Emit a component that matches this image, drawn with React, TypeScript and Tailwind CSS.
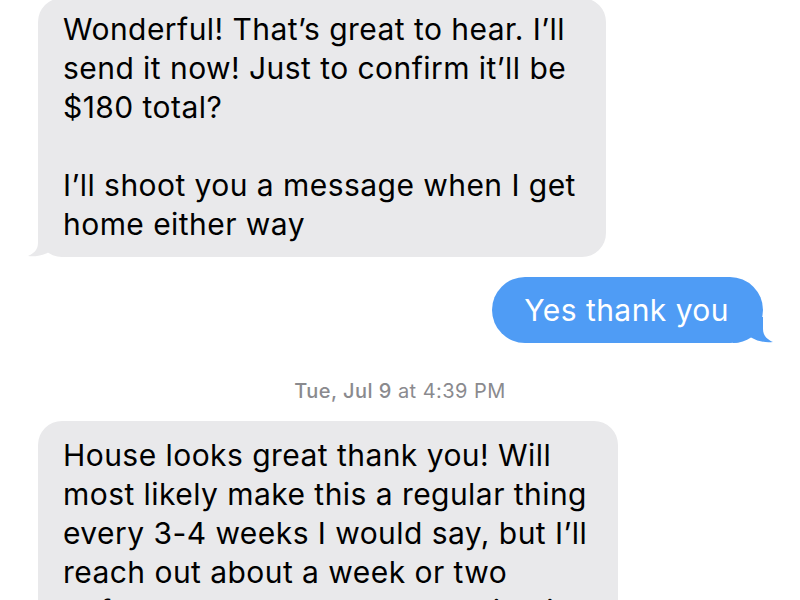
import React from "react";

const font = { fontFamily: "Inter, 'Noto Sans', sans-serif" };

function Tail({ side, color }: { side: "left" | "right"; color: string }) {
  // little curl at the bottom corner of a bubble
  return (
    <svg
      width="40"
      height="26"
      viewBox="0 0 40 26"
      className={
        side === "left"
          ? "absolute -left-[10px] bottom-0"
          : "absolute -right-[10px] bottom-0 -scale-x-100"
      }
    >
      <path
        d="M10 0 L10 12 C10 19 5 23 0 25 C7 26 15 24.5 22 20.5 C27 24 33 26 40 26 L40 0 Z"
        fill={color}
      />
    </svg>
  );
}

function Incoming({ lines, className = "" }: { lines: string[]; className?: string }) {
  return (
    <div className={`relative ml-[38px] rounded-[24px] bg-[#e9e9eb] pl-[25px] pr-[30px] pb-[13px] ${className}`}>
      <Tail side="left" color="#e9e9eb" />
      <div className="relative text-[30px] leading-[39px] text-black tracking-[0.45px]">
        {lines.map((l, i) => (
          <div key={i} className="whitespace-nowrap h-[39px]">
            {l}
          </div>
        ))}
      </div>
    </div>
  );
}

export default function App() {
  return (
    <div className="w-[800px] h-[600px] overflow-hidden bg-white" style={font}>
      <div className="flex flex-col -mt-[2px]">
        <Incoming
          className="w-[568px] pt-[12px]"
          lines={[
            "Wonderful! That’s great to hear. I’ll",
            "send it now! Just to confirm it’ll be",
            "$180 total?",
            "",
            "I’ll shoot you a message when I get",
            "home either way",
          ]}
        />

        <div className="flex justify-end mt-[20px] pr-[37px]">
          <div className="relative h-[66px] rounded-[33px] bg-[#4f9cf5] pl-[32px] pr-[34px] flex items-center">
            <Tail side="right" color="#4f9cf5" />
            <span className="relative text-[30px] text-white tracking-[0.45px]">Yes thank you</span>
          </div>
        </div>

        <div className="mt-[36px] text-center text-[20px] leading-[24px] text-[#8a8a8e] tracking-[0.45px]">
          <span className="font-medium">Tue, Jul 9</span> at 4:39 PM
        </div>

        <Incoming
          className="mt-[18px] w-[580px] pt-[15px]"
          lines={[
            "House looks great thank you! Will",
            "most likely make this a regular thing",
            "every 3-4 weeks I would say, but I’ll",
            "reach out about a week or two",
            "before I need to book something in",
          ]}
        />
      </div>
    </div>
  );
}
